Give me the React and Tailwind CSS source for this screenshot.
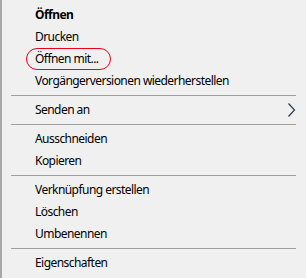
export default function App() {
  const Item = ({ children, bold, circled, arrow }) => (
    <div className="relative h-[22px] flex items-center pl-[35px] text-[12px] tracking-[-0.55px] text-black">
      {circled && (
        <div className="absolute left-[26px] top-0 w-[85px] h-[22px] rounded-[11px] border border-[#e8001c]" />
      )}
      <span className={bold ? "font-bold" : ""}>{children}</span>
      {arrow && (
        <svg className="absolute left-[287px] top-[4px]" width="10" height="14" viewBox="0 0 10 14">
          <path d="M1.5 0.5 L7.5 7 L1.5 13.5" fill="none" stroke="#2b3a4a" strokeWidth="1.2" />
        </svg>
      )}
    </div>
  );
  const Sep = () => (
    <div className="h-[7px] flex items-center pl-[11px] pr-[10px]">
      <div className="h-px w-full bg-[#a0a0a0]" />
    </div>
  );
  return (
    <div
      className="w-[306px] h-[278px] bg-[#f0f0f0] border-l-2 border-[#a8a8a8] pt-[4px] box-border"
      style={{ fontFamily: '"Noto Sans", "Open Sans", sans-serif' }}
    >
      <div className="-ml-[2px]">
        <Item bold>Öffnen</Item>
        <Item>Drucken</Item>
        <Item circled>Öffnen mit...</Item>
        <Item>Vorgängerversionen wiederherstellen</Item>
        <Sep />
        <Item arrow>Senden an</Item>
        <Sep />
        <Item>Ausschneiden</Item>
        <Item>Kopieren</Item>
        <Sep />
        <Item>Verknüpfung erstellen</Item>
        <Item>Löschen</Item>
        <Item>Umbenennen</Item>
        <Sep />
        <Item>Eigenschaften</Item>
      </div>
    </div>
  );
}
